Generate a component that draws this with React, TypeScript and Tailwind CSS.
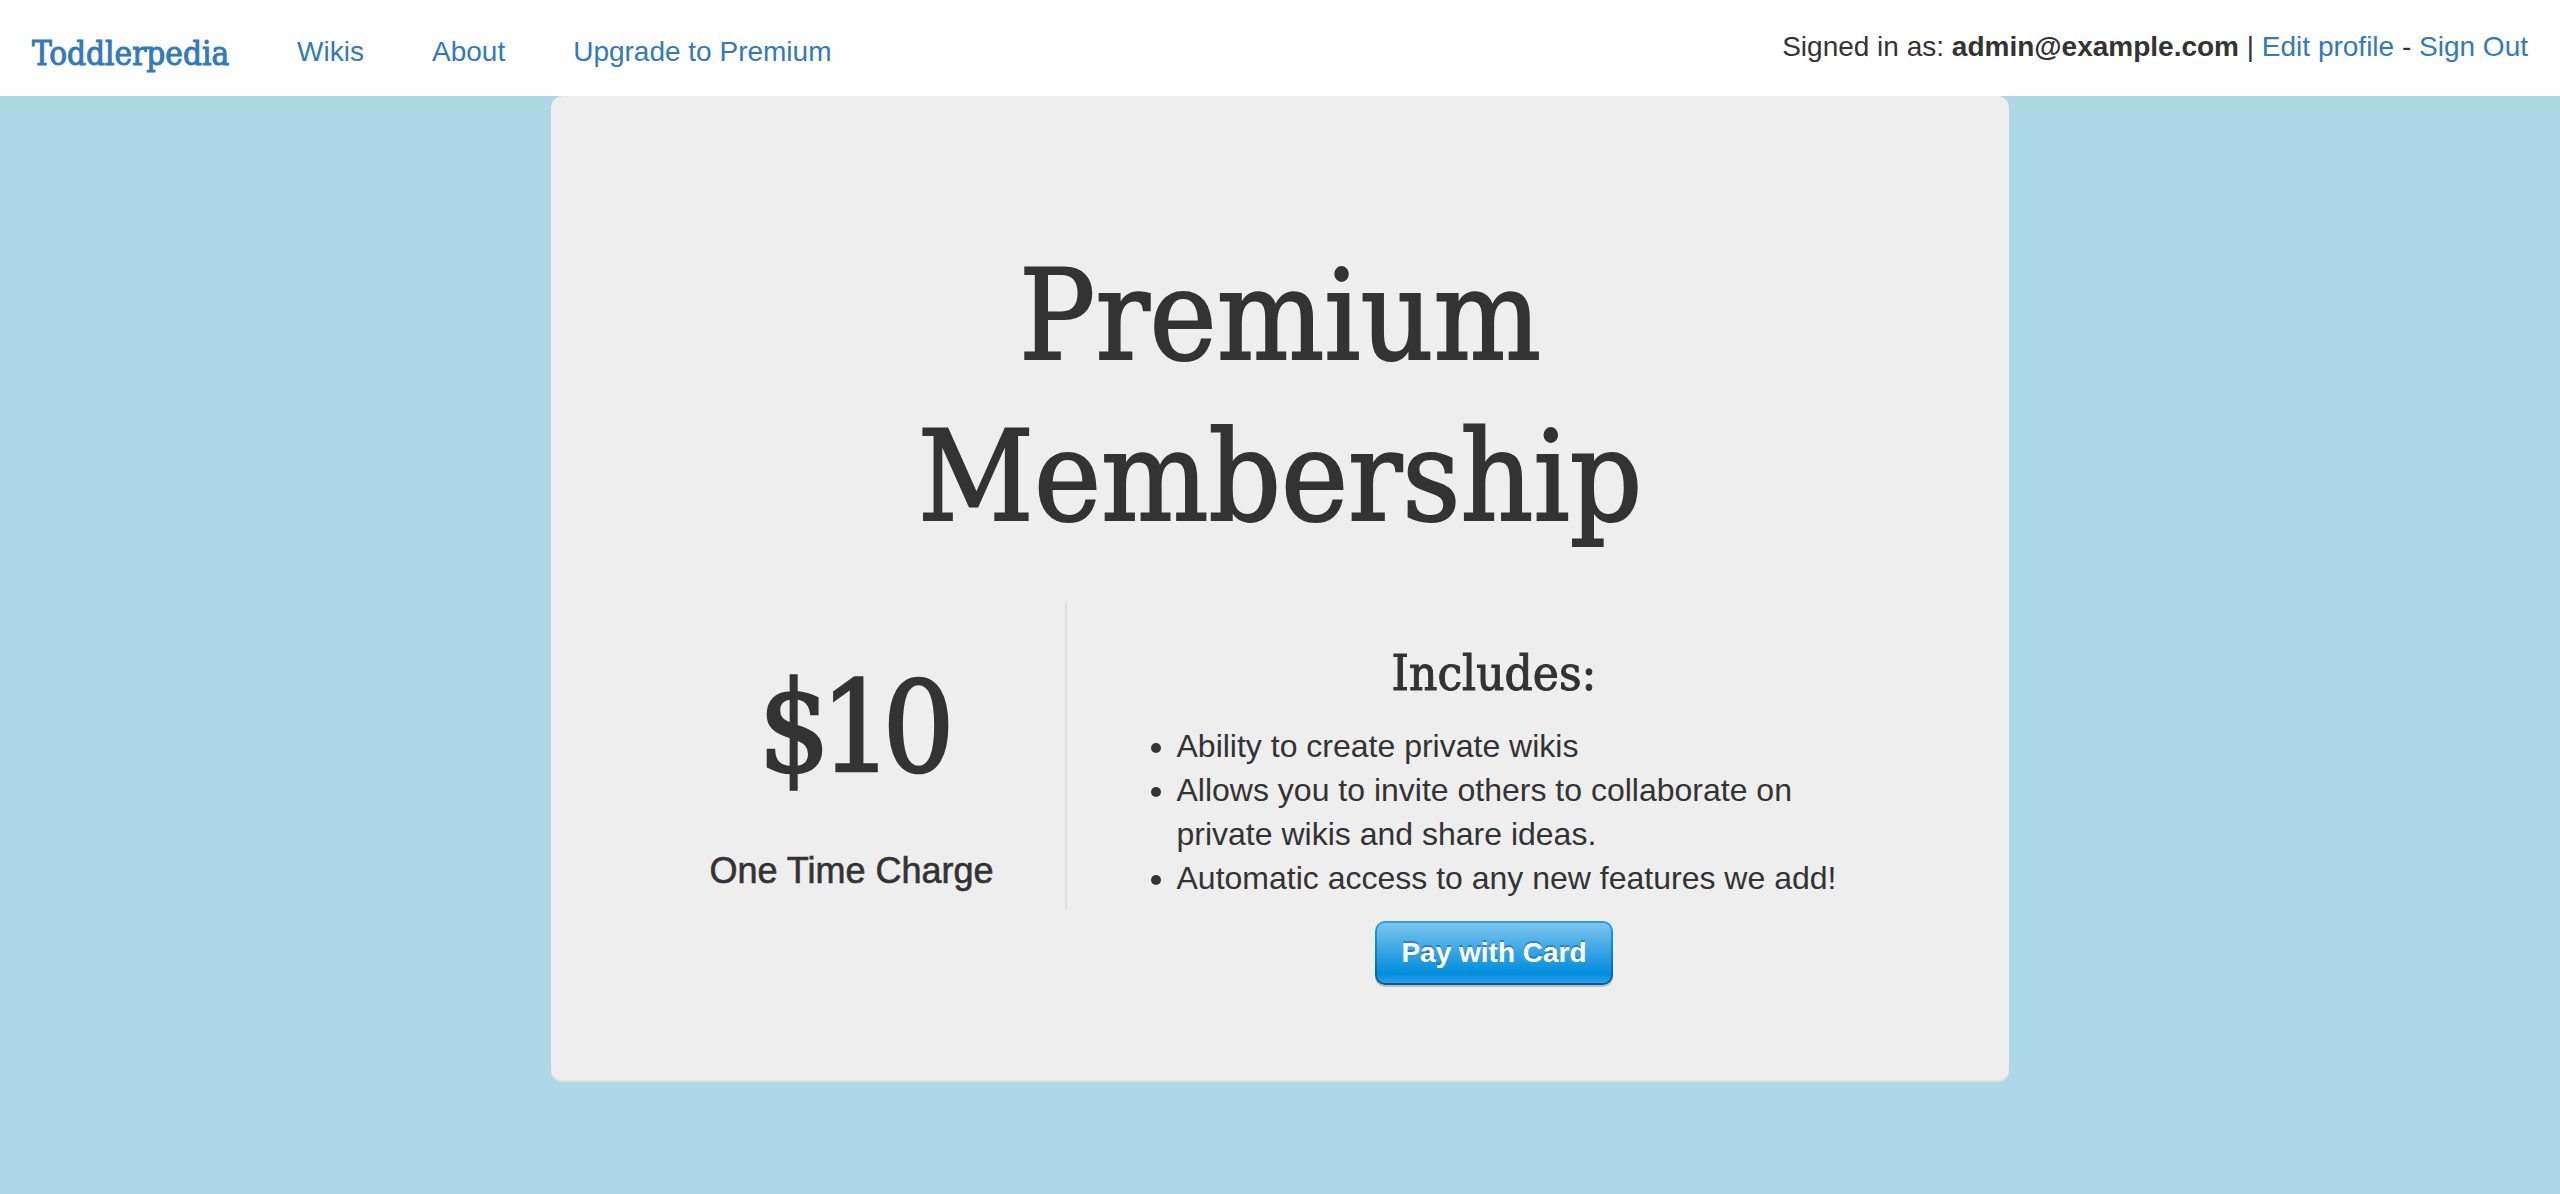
import React from "react";

const serif = { fontFamily: '"DejaVu Serif Condensed", "DejaVu Serif", serif' };

export default function App() {
  return (
    <div className="min-h-[1194px] w-full bg-[#add8e6] text-[#333]" style={{ fontFamily: '"Liberation Sans", Arial, sans-serif' }}>
      <nav className="flex h-[96px] items-start justify-between bg-white px-[32px]">
        <div className="flex items-start">
          <a className="mt-[35px] text-[33px] leading-[38px] text-[#337ab7] [-webkit-text-stroke:1px_#337ab7]" style={serif}>
            Toddlerpedia
          </a>
          <div className="ml-[68px] mt-[32px] flex gap-[68px] text-[28px] leading-[40px] text-[#337ab7]">
            <a>Wikis</a>
            <a>About</a>
            <a>Upgrade to Premium</a>
          </div>
        </div>
        <div className="mt-[27px] text-[28px] leading-[40px]">
          Signed in as: <b>admin@example.com</b> | <a className="text-[#337ab7]">Edit profile</a> -{" "}
          <a className="text-[#337ab7]">Sign Out</a>
        </div>
      </nav>

      <div className="mx-auto w-[1458px] rounded-[12px] border-b-2 border-[#e2e2e2] bg-[#eee] pb-[95px] pt-[139px]">
        <h1 className="text-center text-[126px] font-normal leading-[161px] [-webkit-text-stroke:2px_#333]" style={serif}>
          Premium
          <br />
          Membership
        </h1>
        <div className="mx-auto mt-[45px] grid w-[1283px] grid-cols-[428px_855px] items-start">
          <div className="flex flex-col items-center border-r-2 border-[#dfdfdf] pb-[18px] pt-[45px]">
            <div className="text-[126px] leading-[161px] tracking-[-10px] [-webkit-text-stroke:2.5px_#333]" style={serif}>
              $10
            </div>
            <div className="mt-[43px] text-[36px] leading-[40px] [-webkit-text-stroke:0.6px_#333]">One Time Charge</div>
          </div>
          <div className="flex flex-col items-center px-[30px] pt-[44px]">
            <h3 className="text-[49px] leading-[56px] [-webkit-text-stroke:1px_#333]" style={serif}>
              Includes:
            </h3>
            <ul className="mt-[22px] w-full list-disc pl-[80px] text-[32px] leading-[44px]">
              <li>Ability to create private wikis</li>
              <li>Allows you to invite others to collaborate on private wikis and share ideas.</li>
              <li>Automatic access to any new features we add!</li>
            </ul>
            <button className="mt-[21px] rounded-[10px] bg-[linear-gradient(#28a0e5,#015e94)] p-[2px] shadow-[0_2px_0_rgba(0,0,0,0.2)]">
              <span className="block h-[60px] rounded-[8px] bg-[linear-gradient(#7dc5ee,#008cdd_85%,#30a2e4)] px-[24px] text-[28px] font-bold leading-[60px] text-white [text-shadow:0_-2px_0_rgba(0,0,0,0.25)]">
                Pay with Card
              </span>
            </button>
          </div>
        </div>
      </div>
    </div>
  );
}
